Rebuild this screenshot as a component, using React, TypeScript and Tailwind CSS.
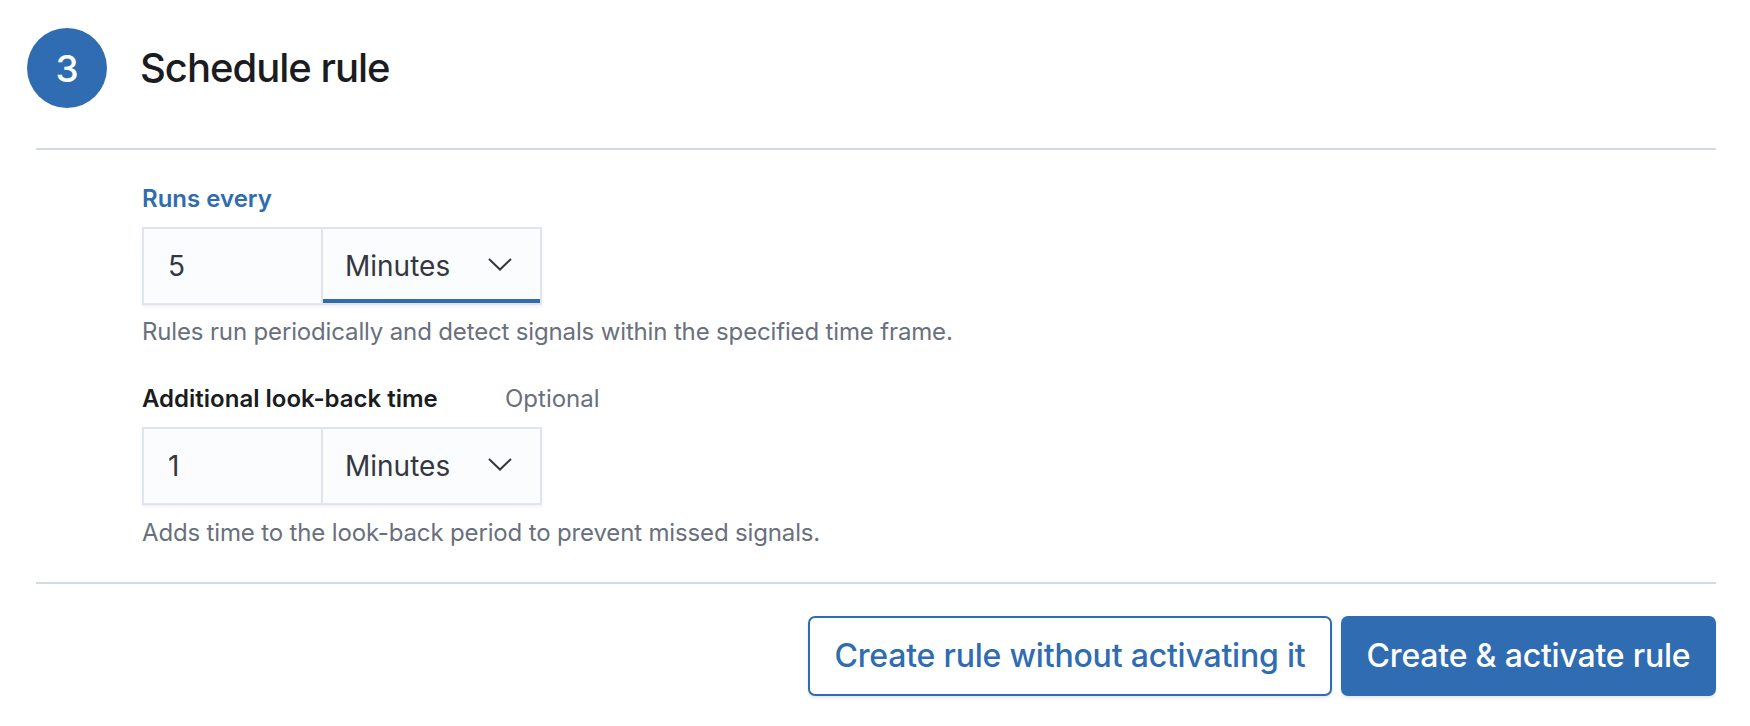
import React from "react";

function Chevron() {
  return (
    <svg width="24" height="13" viewBox="0 0 24 13" fill="none" className="mt-[-4px]">
      <polyline points="1,1 12,11.5 23,1" stroke="#343741" strokeWidth="2" fill="none" />
    </svg>
  );
}

function TimeField({ value, focused }: { value: string; focused?: boolean }) {
  return (
    <div className="flex w-[400px] h-[78px] border-2 border-[#dfe4ee] bg-[#fbfcfd] shadow-[0_2px_3px_rgba(0,0,0,0.06)]">
      <div className="w-[177px] flex items-center pl-[24px] text-[28px] text-[#343741]">{value}</div>
      <div
        className={
          focused
            ? "flex-1 border-l-2 border-[#dfe4ee] flex items-center justify-between pl-[22px] pr-[28px] text-[28px] text-[#343741] bg-[#fbfcfd] shadow-[inset_0_-4px_0_#2f6cb1]"
            : "flex-1 border-l-2 border-[#dfe4ee] flex items-center justify-between pl-[22px] pr-[28px] text-[28px] text-[#343741] bg-[#fbfcfd]"
        }
      >
        <span>Minutes</span>
        <Chevron />
      </div>
    </div>
  );
}

export default function App() {
  return (
    <div className="w-[1750px] h-[726px] bg-white font-['Inter',sans-serif] pt-[28px] pl-[27px] overflow-hidden">
      <div className="flex items-center">
        <div className="w-[80px] h-[80px] rounded-full bg-[#2f6cb1] flex items-center justify-center text-white text-[37px] font-medium leading-none">
          3
        </div>
        <h2 className="ml-[33px] text-[40px] font-[450] tracking-[-0.025em] text-[#1a1c21] leading-[48px]">
          Schedule rule
        </h2>
      </div>

      <div className="ml-[9px] w-[1680px] h-[2px] bg-[#d3dae6] mt-[40px]" />

      <div className="pl-[115px] pt-[34px]">
        <div className="text-[24px] leading-[30px] font-semibold text-[#2f6cb1]">Runs every</div>
        <div className="mt-[13px]">
          <TimeField value="5" focused />
        </div>
        <div className="mt-[12px] text-[24px] leading-[30px] tracking-[-0.15px] text-[#69707d]">
          Rules run periodically and detect signals within the specified time frame.
        </div>

        <div className="mt-[37px] flex items-baseline text-[24px] leading-[30px]">
          <div className="w-[363px] font-semibold text-[#1a1c21]">Additional look-back time</div>
          <div className="text-[#69707d]">Optional</div>
        </div>
        <div className="mt-[13px]">
          <TimeField value="1" />
        </div>
        <div className="mt-[13px] text-[24px] leading-[30px] tracking-[-0.15px] text-[#69707d]">
          Adds time to the look-back period to prevent missed signals.
        </div>
      </div>

      <div className="ml-[9px] w-[1680px] h-[2px] bg-[#d3dae6] mt-[34px]" />

      <div className="mt-[32px] w-[1689px] flex justify-end gap-[9px]">
        <button className="w-[524px] h-[80px] border-2 border-[#2f6cb1] rounded-[7px] bg-white text-[32px] font-[450] tracking-[-0.2px] text-[#2f6cb1] shadow-[0_2px_3px_rgba(0,0,0,0.1)] flex items-center justify-center">
          Create rule without activating it
        </button>
        <button className="w-[375px] h-[80px] rounded-[7px] bg-[#2f6cb1] text-[32px] font-[450] tracking-[-0.2px] text-white shadow-[0_2px_3px_rgba(0,0,0,0.1)] flex items-center justify-center">
          Create &amp; activate rule
        </button>
      </div>
    </div>
  );
}
